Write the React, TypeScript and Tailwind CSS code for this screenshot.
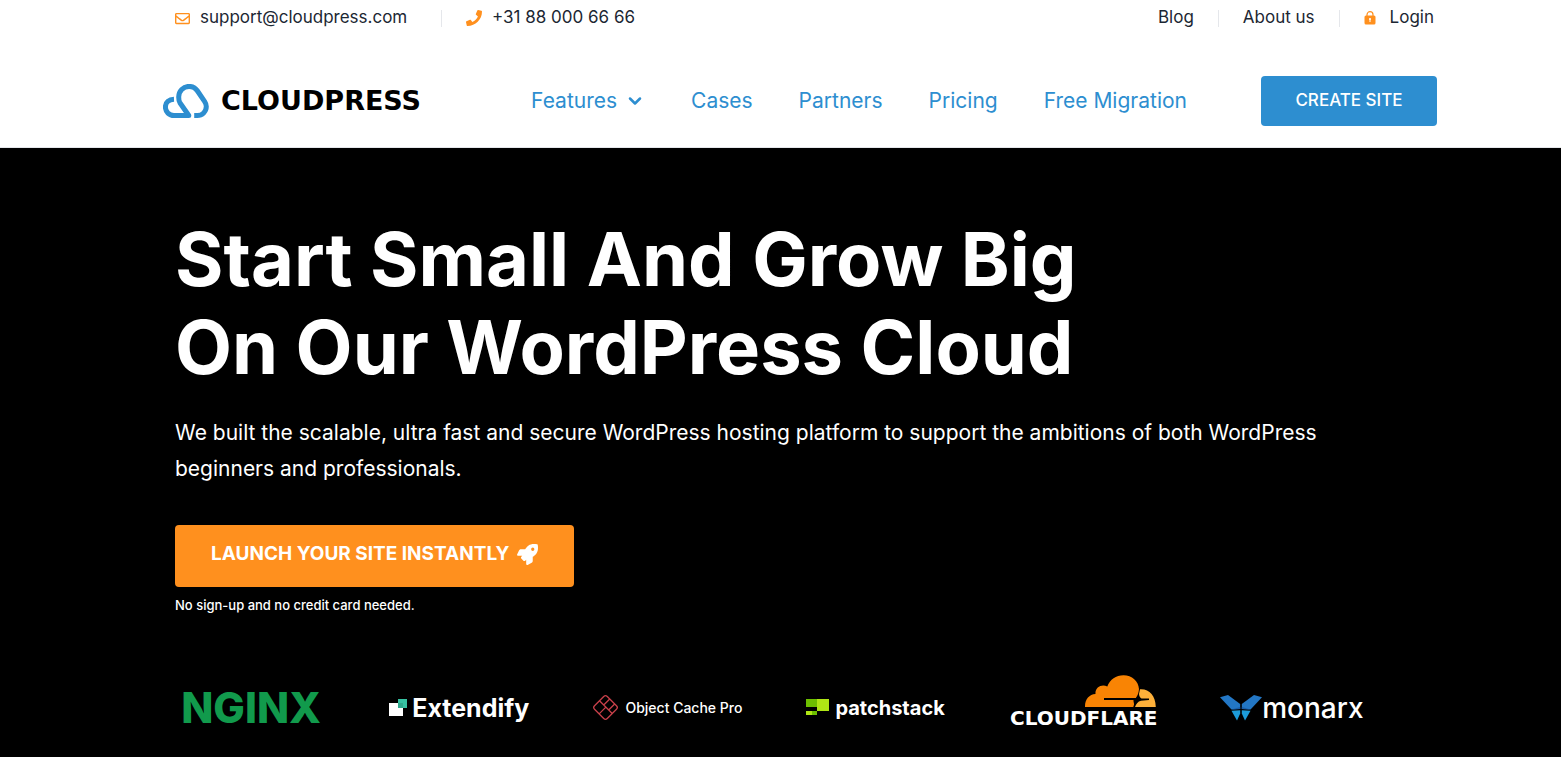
import { ChevronDown } from "lucide-react";
import { FaPhone, FaRegEnvelope, FaRocket } from "react-icons/fa";

const navLinks = ["Cases", "Partners", "Pricing", "Free Migration"];

function CloudMark() {
  return (
    <svg width="46" height="34" viewBox="0 0 46 34" fill="none" aria-hidden="true">
      <path
        d="M11 15.200C6 15.400 2.400 18.400 2.400 23c0 5 3.800 8.500 8.600 8.500h14.800L16.900 18.700C15.800 17 15.700 15 15.700 13c0-6 4.600-10.600 10.400-10.600 3.600 0 6.400 1.600 8.400 4.600l7.200 10.600c1.100 1.700 1.600 3.200 1.600 5 0 5-4 8.900-9 8.900h-3.100"
        stroke="#2d8ed0"
        strokeWidth="5"
        strokeLinejoin="round"
      />
    </svg>
  );
}

function LockIcon() {
  return (
    <svg width="12" height="14" viewBox="0 0 12 14" aria-hidden="true">
      <path d="M3 6V3.700a3 3 0 0 1 6 0V6" fill="none" stroke="#ff901e" strokeWidth="1.200" />
      <rect x="0.500" y="4.500" width="11" height="9" rx="1.500" fill="#ff901e" />
      <path d="M6 7a1 1 0 0 1 .5 1.900V11h-1V8.900A1 1 0 0 1 6 7Z" fill="#fff" />
    </svg>
  );
}

function Divider() {
  return <span className="h-[17px] w-px bg-gray-200" />;
}

function TopBar() {
  return (
    <div className="flex h-9 items-center justify-between pl-3 pr-[3px] text-[17px] text-[#1c2733]">
      <div className="flex items-center gap-6">
        <a href="#email" className="flex min-w-[242px] items-center gap-2.5">
          <FaRegEnvelope className="size-[15px] text-[#ff901e]" />
          support@cloudpress.com
        </a>
        <Divider />
        <a href="#phone" className="flex items-center gap-2.5">
          <FaPhone className="size-4 text-[#ff901e]" />
          +31 88 000 66 66
        </a>
      </div>
      <div className="flex items-center gap-6">
        <a href="#blog">Blog</a>
        <Divider />
        <a href="#about">About us</a>
        <Divider />
        <a href="#login" className="flex items-center gap-3.5">
          <LockIcon />
          Login
        </a>
      </div>
    </div>
  );
}

function Header() {
  return (
    <header className="border-b border-gray-200 bg-white pl-[163px] pr-[124px]">
      <TopBar />
      <div className="flex items-center pb-[21px] pt-10">
        <a href="#home" className="flex items-center gap-3">
          <CloudMark />
          <span className="font-['DejaVu_Sans',sans-serif] text-[27px] font-bold leading-8 text-black">
            CLOUDPRESS
          </span>
        </a>
        <nav className="ml-auto mr-[74px] flex items-center gap-[46px] text-[21px] text-[#2d8ed0]">
          <a href="#features" className="flex items-center gap-2">
            Features
            <ChevronDown size={20} strokeWidth={3} />
          </a>
          {navLinks.map((label) => (
            <a key={label} href="#nav">
              {label}
            </a>
          ))}
        </nav>
        <button className="h-[50px] w-44 rounded bg-[#2d8ed0] text-[17px] font-medium text-white">
          CREATE SITE
        </button>
      </div>
    </header>
  );
}

function ExtendifyMark() {
  return (
    <svg width="19" height="19" viewBox="0 0 19 19" aria-hidden="true">
      <path d="M0 5h14v13H0z" fill="#fff" />
      <path d="M9 1h9v9H9z" fill="#37c2a2" />
      <path d="M9 5h5v5H9z" fill="#2fa88c" />
    </svg>
  );
}

function ObjectCacheMark() {
  return (
    <svg width="27" height="27" viewBox="0 0 27 27" fill="none" stroke="#c8404a" strokeWidth="1.300" aria-hidden="true">
      <g transform="rotate(45 13.500 13.500)">
        <rect x="4.500" y="4.500" width="18" height="18" rx="2.500" />
        <path d="M4.500 13h18M10.500 4.500v8.500M13.500 13v9.500M17.500 4.500V13" />
      </g>
    </svg>
  );
}

function PatchstackMark() {
  return (
    <svg width="23" height="17" viewBox="0 0 23 17" aria-hidden="true">
      <path d="M0 0h11v8H0z" fill="#6dbf00" />
      <path d="M11 0h12v12H11z" fill="#afe615" />
      <path d="M0 12h6v4H0z" fill="#afe615" />
      <path d="M6 12h5v4H6z" fill="#6dbf00" />
    </svg>
  );
}

function CloudflareMark() {
  return (
    <svg width="71" height="33" viewBox="0 0 71 33" className="mr-px" aria-hidden="true">
      <path
        d="M0 32C-.2 24.500 4 19.500 10.500 19 9.800 12.500 16.500 8.500 22.300 11.400 25 4.300 31 .2 38.500.2 47 .2 53.500 6 54 14c-.3 3.500-1.200 6.500-3.200 9H19v2h29.500c-.2 2 1 3.500.4 5l-.6 2Z"
        fill="#f98404"
      />
      <path
        d="M55 14.300c9-.7 15.500 6 15.800 17.700H50c1.300-3.500 2.800-5.500 6-6.300l8-.7v-1.500h-7.500c-1.500-1-2.300-2.300-2.500-4.500Z"
        fill="#fdb03a"
      />
    </svg>
  );
}

function MonarxMark() {
  return (
    <svg width="42" height="26" viewBox="0 0 42 26" aria-hidden="true">
      <path d="M0 2.300 8 0l12.200 9v5l-8.700.5Z" fill="#2377c5" />
      <path d="M42 2.300 34 0 21.800 9v5l8.700.5Z" fill="#2377c5" />
      <path d="m11.500 14.500 8.700-.5v-2Z" fill="#195eaa" />
      <path d="m30.500 14.500-8.700-.5v-2Z" fill="#195eaa" />
      <path d="m11.500 15.700 8.700-.5v3.300l-3.200 7Z" fill="#1c9bd9" />
      <path d="m30.500 15.700-8.700-.5v3.300l3.200 7Z" fill="#1c9bd9" />
    </svg>
  );
}

function Partners() {
  return (
    <ul className="-ml-7 mt-[60px] grid h-16 grid-cols-6 items-center justify-items-center">
      <li className="text-[42px] font-extrabold leading-10 text-[#119a4c]">NGINX</li>
      <li className="flex items-center gap-1 text-[25px] font-bold leading-8">
        <ExtendifyMark />
        Extendify
      </li>
      <li className="flex items-center gap-1.5 text-sm font-medium">
        <ObjectCacheMark />
        Object Cache Pro
      </li>
      <li className="flex items-center gap-1.5 text-xl font-bold leading-6">
        <PatchstackMark />
        patchstack
      </li>
      <li className="flex flex-col items-end pb-3">
        <CloudflareMark />
        <span className="font-['DejaVu_Sans',sans-serif] text-xl font-bold leading-5">CLOUDFLARE</span>
      </li>
      <li className="flex items-center text-[28px] font-medium leading-8">
        <MonarxMark />
        monarx
      </li>
    </ul>
  );
}

function Hero() {
  return (
    <main className="grow bg-black pb-4 pl-[175px] pr-[165px] pt-[67px] text-white">
      <h1 className="text-[74px] font-bold leading-[88px]">
        Start Small And Grow Big
        <br />
        On Our WordPress Cloud
      </h1>
      <p className="mt-6 max-w-[1190px] text-[21px] leading-9">
        We built the scalable, ultra fast and secure WordPress hosting platform to support the ambitions of both
        WordPress beginners and professionals.
      </p>
      <button className="mt-[38px] flex h-[62px] items-center gap-2 rounded bg-[#ff901e] px-9 pb-1 text-[19px] font-bold">
        LAUNCH YOUR SITE INSTANTLY
        <FaRocket size={21} />
      </button>
      <p className="mt-2 text-[13px] font-medium leading-5">No sign-up and no credit card needed.</p>
      <Partners />
    </main>
  );
}

export default function App() {
  return (
    <div className="flex min-h-screen flex-col font-['Inter',sans-serif]">
      <Header />
      <Hero />
    </div>
  );
}
